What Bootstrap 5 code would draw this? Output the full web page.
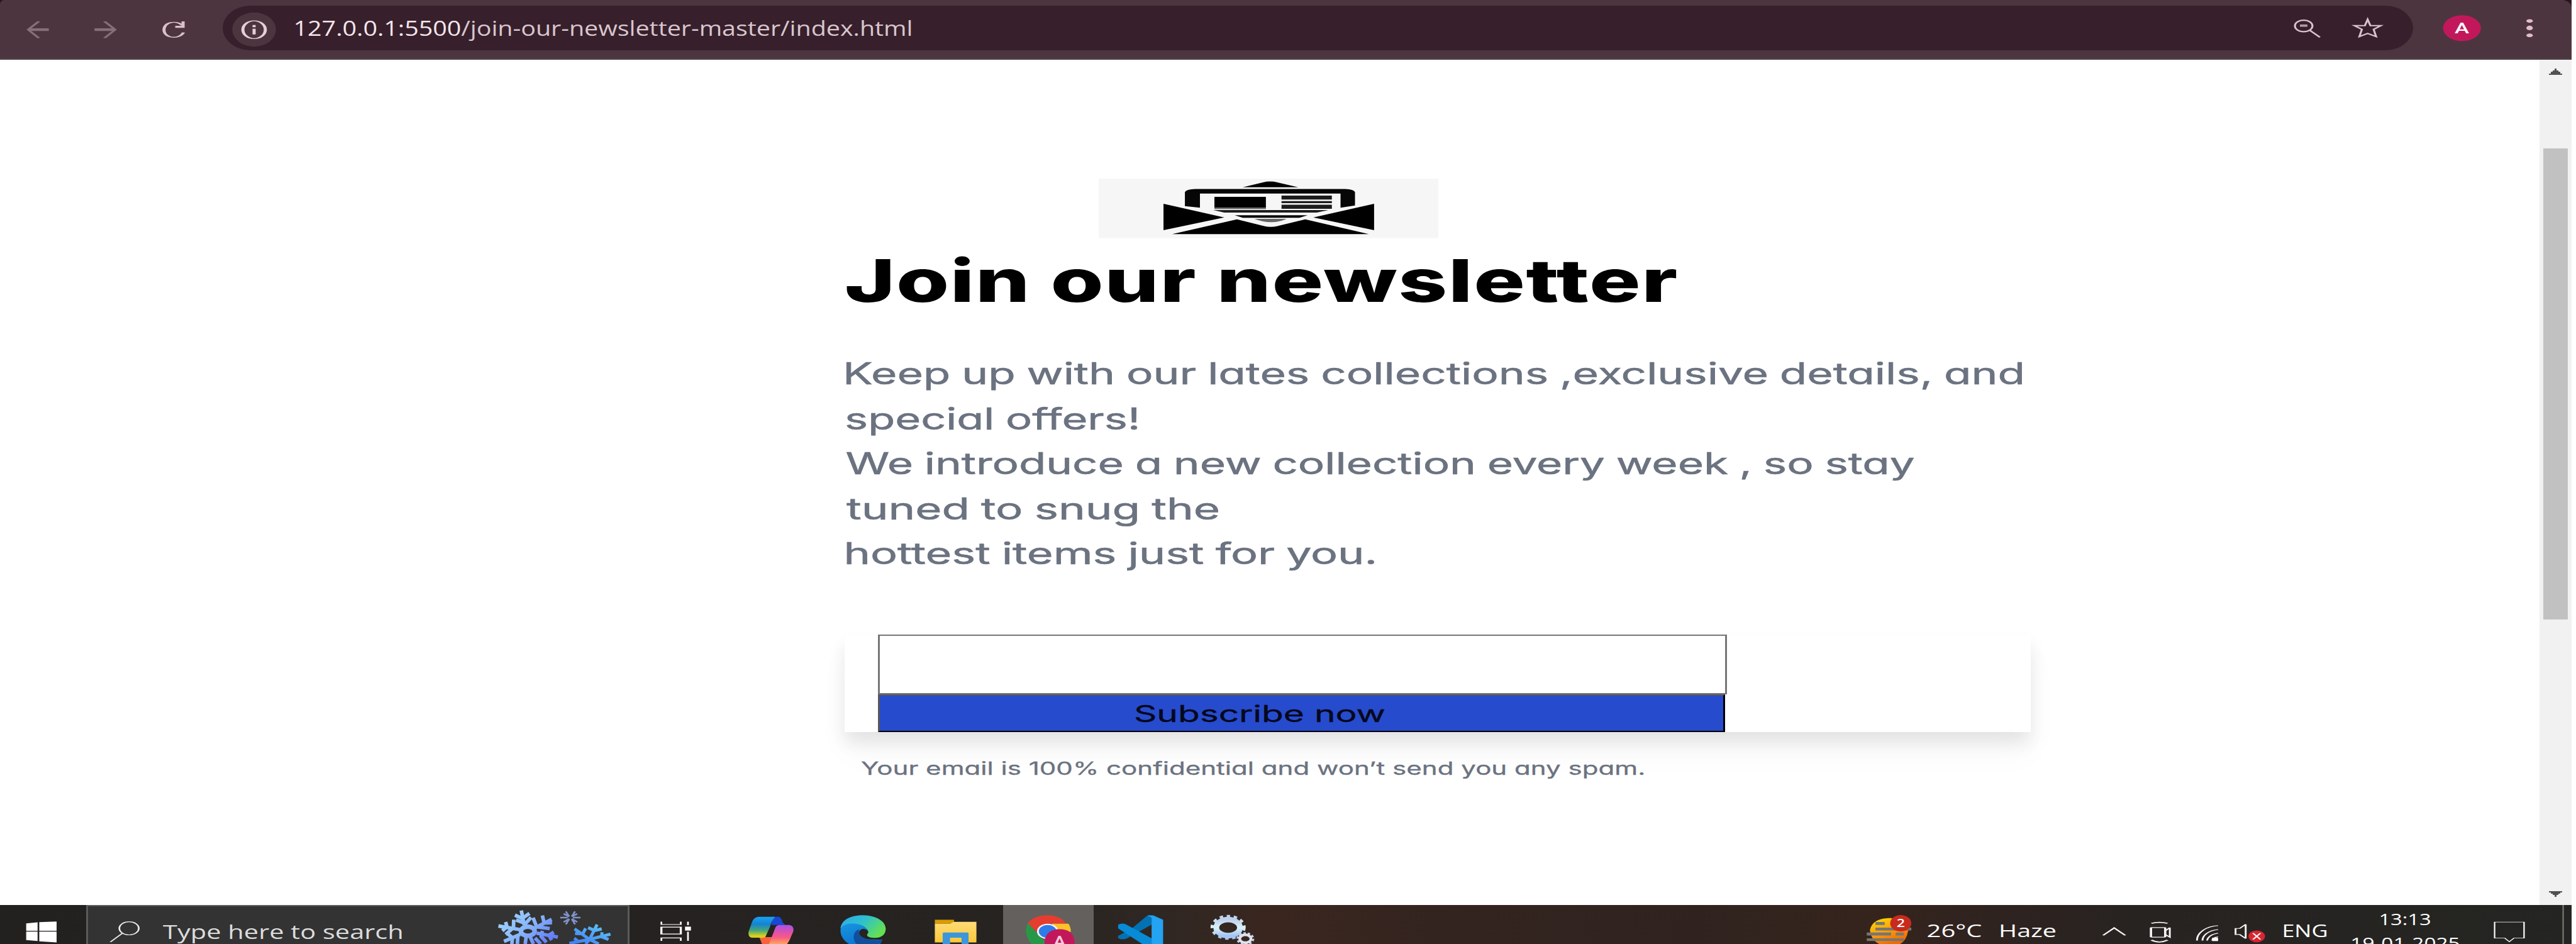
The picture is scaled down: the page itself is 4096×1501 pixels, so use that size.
<!DOCTYPE html>
<html lang="en">
<head>
<meta charset="utf-8">
<title>Join our newsletter</title>
<link href="https://cdn.jsdelivr.net/npm/bootstrap@5.3.0/dist/css/bootstrap.min.css" rel="stylesheet">
<style>
  html, body { height: 1501px; overflow: hidden; background: #fff; }
  .screen { width: 4089px; height: 1501px; }
  .fit { display: block; white-space: pre; width: max-content; transform-origin: 0 0; flex: none; }
  svg { display: block; flex: none; }

  .toolbar { height: 95px; background: #4d3540; border-bottom: 2px solid #4b4347; font-family: "Open Sans", "Noto Sans", sans-serif; }
  .omnibox { width: 3483px; height: 71.4px; margin-top: 8.6px; background: #37202b; border-radius: 45px / 36px; }
  .address { font-size: 32px; line-height: 71.4px; margin-left: 6px; width: 990px; color: #d9c6ce; }
  .address b { font-weight: 400; color: #f5e6ec; }

  .page-view { height: 1344px; }
  .page-main { width: 4038px; padding: 189px 0 0 1343px; font-family: Inter, "Open Sans", sans-serif; font-feature-settings: "cv11", "calt" 0, "liga" 0, "dlig" 0; font-variant-ligatures: none; }
  .column { width: 1886px; }
  .envelope { margin-left: 404px; }
  .headline { font-size: 94px; font-weight: 800; line-height: 100px; margin: 17px 0 0 3px; color: #000; letter-spacing: .012em; }
  .intro { font-size: 48px; line-height: 71.4px; margin: 62.8px 0 0 3px; color: #6b7280; -webkit-text-stroke: .6px #6b7280; }
  .intro .fit { word-spacing: -.03em; }
  .signup { height: 155px; margin-top: 94px; padding-left: 53px; background: #fff; box-shadow: 0 17px 26px rgba(0,0,0,.085), 0 34px 50px rgba(0,0,0,.03); }
  .email-box { width: 1350px; height: 94.4px; border: solid #767676; border-width: 2px 3px; border-radius: 0; padding: 0; background: #fff; display: block; }
  .subscribe { width: 1347px; height: 60.6px; border-style: solid; border-width: 2px 3px; border-color: #585858 #000 #000 #585858; background: #274bcd; color: #04081c; font-size: 37px; line-height: 56.6px; padding: 1px 0 0 407px; border-radius: 0; display: block; text-align: left; -webkit-text-stroke: .4px #04081c; }
  .note { font-size: 28.5px; line-height: 40px; margin: 37.6px 0 0 26px; color: #6b7280; -webkit-text-stroke: .3px #6b7280; }
  .scroller { width: 51px; background: #f1f1f1; padding: 14px 5px 0 15px; }
  .thumb { width: 39px; height: 749px; margin: 117px 0 0 -9px; background: #c1c1c1; }

  .taskbar { height: 62px; font-family: "Open Sans", "Noto Sans", sans-serif; color: #fff; overflow: hidden;
    background: linear-gradient(90deg, #232120 0, #262321 1600px, #2f2723 1850px, #3a261f 2020px, #33241f 2300px, #30231f 2700px, #35241c 2980px, #31231f 3100px, #272321 3400px, #242522 4089px); }
  .search { width: 864px; background: #333; border: solid #5b5b5b; border-width: 2px 3px 0; }
  .search .hint { width: 400px; font-size: 31px; line-height: 48px; padding-top: 16px; color: #dcdcdc; }
  .tray-text { font-size: 27.5px; line-height: 40px; padding-top: 21px; }
  .clock { font-size: 25px; line-height: 38.4px; padding-top: 2.5px; width: 170px; }
</style>
</head>
<body>
<div class="screen d-flex flex-column">

  <header class="toolbar d-flex flex-shrink-0">
    <svg width="354" height="93" viewBox="0 0 355.7 335.5" preserveAspectRatio="none" fill="none">
      <path d="M0 0H6Q1 4 0 22Z" fill="#2b131d"/>
      <g stroke="#866f79" stroke-width="5"><path d="M62 123L45 170L62 218M167 123L184 170L167 218"/><path d="M45 170H78M151 170H184" stroke-width="15"/></g>
      <path d="M291 145C285 118 263 120 262 170C262 225 288 225 293 186" stroke="#dbbfcb" stroke-width="5"/><path d="M295 123V160H280V148H290V123Z" fill="#dbbfcb"/>
    </svg>
    <div class="omnibox d-flex">
      <svg width="109" height="71.4" viewBox="356 33 110 257.6" preserveAspectRatio="none">
        <ellipse cx="406.500" cy="170" rx="35" ry="98" fill="#4d3540"/>
        <ellipse cx="406.500" cy="171" rx="18" ry="51" fill="none" stroke="#e4d0d9" stroke-width="5"/>
        <path d="M404 144h5v13h-5zM404 166h5v32h-5z" fill="#e4d0d9"/>
      </svg>
      <div class="address"><span class="fit" data-ink="980"><b>127.0.0.1:5500</b>/join-our-newsletter-master/index.html</span></div>
      <svg class="ms-auto" width="205" height="71.4" viewBox="402 33 516 274.5" preserveAspectRatio="none" fill="none" stroke="#d9c3cd" stroke-width="8">
        <circle cx="480" cy="157" r="35"/><path d="M504 183L545 226"/><path d="M465 155H495" stroke="#b49ca7" stroke-width="14"/>
        <path d="M736 117L747 155L789 155L760 178L770 222L736 203L703 222L713 178L683 155L725 155Z" stroke-width="8"/>
      </svg>
    </div>
    <svg width="252" height="93" viewBox="918 0 634 357.6" preserveAspectRatio="none">
      <path d="M1520 0H1552V46Q1550 12 1520 0Z" fill="#2b131d"/>
      <ellipse cx="1113.500" cy="172" rx="75.500" ry="79" fill="#c2185b"/>
      <text x="1084" y="204" font-size="90" textLength="58" lengthAdjust="spacingAndGlyphs" fill="#fff" font-family="Roboto, sans-serif" font-weight="500">A</text>
      <g fill="#e2bccb"><ellipse cx="1384" cy="128" rx="13" ry="11"/><ellipse cx="1384" cy="171" rx="13" ry="14"/><ellipse cx="1384" cy="216" rx="13" ry="11"/></g>
    </svg>
  </header>

  <div class="page-view d-flex flex-shrink-0">
    <main class="page-main flex-shrink-0">
      <div class="column">
        <svg class="envelope" width="540" height="94.500" viewBox="499 72 587 363" preserveAspectRatio="none">
          <rect x="499" y="72" width="587" height="363" fill="#f6f6f6"/>
          <path d="M748 125L783 95Q795 84 808 95L844 125Z"/>
          <path d="M648 240V155Q650 136 666 135H925Q940 137 942 155V236L917 250V163H674V250Z" fill="#060606"/>
          <path d="M699 183H788V250H699Z"/><path d="M699 250H788V258H699Z" fill="#666"/>
          <path d="M815 176H902V200H815ZM815 209H902V222H815ZM815 231H902V256H815Z" fill="#1c1c1c"/>
          <path d="M697 264H896L876 279H716Z" fill="#1c1c1c"/><path d="M734 296H860L846 311H748Z"/>
          <path d="M768 318H824Q798 358 768 318Z" fill="#666"/>
          <path d="M611 226L716 309L611 387ZM975 226L870 309L975 387Z"/>
          <path d="M626 411L738 321L785 362Q796 372 808 362L856 321L966 411Z"/>
        </svg>
        <h1 class="headline"><span class="fit" data-ink="1321">Join our newsletter</span></h1>
        <div class="intro">
          <span class="fit" data-ink="1869">Keep up with our lates collections ,exclusive details, and</span>
          <span class="fit" data-ink="463">special offers!</span>
          <span class="fit" data-ink="1697">We introduce a new collection every week , so stay</span>
          <span class="fit" data-ink="591">tuned to snug the</span>
          <span class="fit" data-ink="840">hottest items just for you.</span>
        </div>
        <form class="signup">
          <input class="email-box" type="email" aria-label="Email">
          <button class="subscribe" type="button"><span class="fit" data-ink="395">Subscribe now</span></button>
        </form>
        <div class="note"><span class="fit" data-ink="1244">Your email is 100% confidential and won’t send you any spam.</span></div>
      </div>
    </main>
    <div class="scroller flex-shrink-0 d-flex flex-column">
      <svg width="21" height="10" viewBox="0 0 21 10"><path d="M0 10V8H3V5H6V3H9V0H12V3H15V5H18V8H21V10Z" fill="#505050"/></svg>
      <div class="thumb"></div>
      <svg class="mt-auto" style="margin-bottom:13px" width="21" height="9" viewBox="0 0 21 9"><path d="M0 0H21V2H18V4H15V6H12V9H9V6H6V4H3V2H0Z" fill="#505050"/></svg>
    </div>
  </div>

  <footer class="taskbar d-flex flex-shrink-0">
    <svg width="137" height="62" viewBox="0 132 204 238" preserveAspectRatio="none" fill="#fff">
      <path d="M62 244L89 238V289H62ZM93 237L134 233V289H93ZM62 294H89V352L62 346ZM93 294H134V360L93 354Z"/>
    </svg>
    <div class="search d-flex">
      <svg width="119" height="60" viewBox="208 141 177 229" preserveAspectRatio="none" fill="none" stroke="#eee" stroke-width="4">
        <ellipse cx="305" cy="275" rx="23" ry="40"/><path d="M289 305L261 358"/>
      </svg>
      <div class="hint"><span class="fit" data-ink="380">Type here to search</span></div>
      <svg class="ms-auto" width="233" height="60" viewBox="0 20 897 230" preserveAspectRatio="none" fill="none">
        <defs>
          <linearGradient id="ice" gradientUnits="userSpaceOnUse" x1="200" y1="50" x2="380" y2="250"><stop offset="0" stop-color="#9bd0fb"/><stop offset=".5" stop-color="#86b4fb"/><stop offset="1" stop-color="#6580f4"/></linearGradient>
          <linearGradient id="ice2" gradientUnits="userSpaceOnUse" x1="700" y1="130" x2="640" y2="260"><stop offset="0" stop-color="#5bbcf5"/><stop offset="1" stop-color="#4484f2"/></linearGradient>
        </defs>
        <g stroke="url(#ice)" stroke-width="22">
          <path d="M246 46L264 135M207 74L252 94L296 64M214 104L272 125L306 88"/>
          <path d="M432 100L330 152M375 76L386 122L434 120M318 90L340 145L420 156"/>
          <path d="M470 208L340 184M445 178L415 196L432 226M375 170L368 205L400 240"/>
          <path d="M106 140L235 162M150 116L158 144L130 170M200 102L198 150L150 192"/>
          <path d="M140 234L238 192M160 186L192 212L188 250M225 200L222 250M300 205L320 250M276 205L270 250M330 214L365 250"/>
          <ellipse cx="286" cy="172" rx="42" ry="28" stroke-width="28"/>
        </g>
        <g stroke="#7f92c8" stroke-width="10"><path d="M484 89H530M562 89H608M518 52L540 82M554 98L576 130M576 52L554 82M540 98L518 130M505 66L530 78L522 54M588 66L565 78L570 54M505 116L530 102L524 126M588 116L565 102L570 126"/></g>
        <g stroke="url(#ice2)" stroke-width="19">
          <path d="M710 132L664 222M655 150L694 168L738 158M572 158L664 222M575 186L622 188L640 155M792 190L664 222M740 178L738 206L780 222M540 246L664 222M570 214L600 240M664 222L720 250M664 222L640 250"/>
        </g>
      </svg>
    </div>
    <svg width="139" height="62" viewBox="-22.400 132 207 238" preserveAspectRatio="none" fill="none" stroke="#fff" stroke-width="4">
      <path d="M53 234V251H99V234M53 351V333H99V351"/><rect x="53" y="267" width="46" height="42" stroke-width="5"/>
      <path d="M116 234V255M116 295V351"/><path d="M109 264h14v24h-14z" fill="#fff" stroke="none"/>
    </svg>
    <svg width="160" height="62" viewBox="-117 12 615 238" preserveAspectRatio="none">
      <defs>
        <linearGradient id="cpA" x1="0" y1="0" x2="0" y2="1"><stop offset="0" stop-color="#1ba2f5"/><stop offset=".35" stop-color="#1583d0"/><stop offset=".65" stop-color="#46a678"/><stop offset=".9" stop-color="#d8cf1d"/></linearGradient>
        <linearGradient id="cpB" x1="0" y1="0" x2="0" y2="1"><stop offset="0" stop-color="#a553ea"/><stop offset=".35" stop-color="#d951b0"/><stop offset=".65" stop-color="#f75a83"/><stop offset="1" stop-color="#ffa55c"/></linearGradient>
      </defs>
      <path d="M225 84H262Q280 92 283 116L300 134H215Z" fill="#1748d2"/>
      <path d="M142 208H220L200 250H158Z" fill="#f8613c"/>
      <path d="M135 84H238Q218 105 205 150L180 205Q172 215 140 212H95Q72 206 76 176L98 115Q108 88 135 84Z" fill="url(#cpA)"/>
      <path d="M262 134H325Q355 138 350 172L325 230L312 250H200L225 190L240 150Q246 136 262 134Z" fill="url(#cpB)"/>
    </svg>
    <svg width="150" height="62" viewBox="498 12 577 238" preserveAspectRatio="none">
      <defs>
        <linearGradient id="edA" x1="0" y1="0" x2="1" y2=".5"><stop offset="0" stop-color="#30a8ee"/><stop offset=".5" stop-color="#2dc0cf"/><stop offset="1" stop-color="#63df55"/></linearGradient>
        <linearGradient id="edB" x1="0" y1="0" x2=".6" y2="1"><stop offset="0" stop-color="#1895dd"/><stop offset="1" stop-color="#0b74d4"/></linearGradient>
      </defs>
      <path d="M638 155C645 100 700 74 778 74C860 76 915 112 915 158C914 195 885 214 845 213C805 212 790 198 808 182C812 160 780 140 720 136Z" fill="url(#edA)"/>
      <path d="M638 165C640 135 680 124 715 125C765 126 800 148 806 170C790 150 756 155 752 178C752 208 785 225 840 222L895 224L880 250H690C650 225 638 195 638 165Z" fill="url(#edB)"/>
      <path d="M750 160C715 175 708 215 735 250H875L897 224C830 232 765 220 752 186Z" fill="#114f9d"/>
    </svg>
    <svg width="145" height="62" viewBox="1075 12 557 238" preserveAspectRatio="none">
      <defs><linearGradient id="fo" x1="0" y1="0" x2="0" y2="1"><stop offset="0" stop-color="#ffdc77"/><stop offset="1" stop-color="#fbc837"/></linearGradient></defs>
      <path d="M1215 102H1332V126H1215Z" fill="#dc9b00"/><path d="M1215 126H1310L1330 115H1469V240H1215Z" fill="url(#fo)"/>
      <path d="M1263 250V186Q1263 180 1270 180H1415Q1421 180 1421 186V250H1378V212H1308V250Z" fill="#3c96dc"/>
    </svg>
    <svg width="144" height="62" viewBox="12 12 535 238" preserveAspectRatio="none">
      <rect x="12" y="12" width="535" height="238" fill="#64605d"/>
      <path d="M155 125C185 85 230 74 280 74C330 75 365 95 385 126H275L220 185Z" fill="#e53d30"/>
      <path d="M158 122C140 160 142 205 180 250H270L215 185Z" fill="#279847"/>
      <path d="M300 126H398Q412 145 412 175L330 190Z" fill="#fcc22c"/>
      <ellipse cx="275" cy="173" rx="63" ry="47" fill="#f5f5f8"/><ellipse cx="275" cy="173" rx="52" ry="39" fill="#2f7bea"/>
      <path d="M257 250C255 190 290 160 345 160C405 160 435 190 435 250Z" fill="#c2185b"/>
      <text x="307" y="268" font-size="98" textLength="76" lengthAdjust="spacingAndGlyphs" fill="#f7cddd" font-family="Roboto, sans-serif" font-weight="500">A</text>
    </svg>
    <svg width="141" height="62" viewBox="547 12 525 238" preserveAspectRatio="none">
      <path d="M866 75H890V132L745 215Q715 228 692 214V200L770 158Z" fill="#0272b4"/>
      <path d="M692 132Q715 120 738 130L890 215V250H835L692 155Z" fill="#078bd6"/>
      <path d="M866 75H900L958 102V250H890V90Z" fill="#23a3f1"/>
    </svg>
    <svg width="220" height="62" viewBox="1072 12 819 238" preserveAspectRatio="none" fill="none">
      <defs><linearGradient id="ge" x1="0" y1="0" x2="0" y2="1"><stop offset="0" stop-color="#bdcfee"/><stop offset=".5" stop-color="#d9f3f7"/><stop offset="1" stop-color="#a4c4f4"/></linearGradient></defs>
      <ellipse cx="1343" cy="148" rx="94" ry="66" stroke="url(#ge)" stroke-width="20" stroke-dasharray="20 21"/>
      <ellipse cx="1343" cy="150" rx="70" ry="49" stroke="url(#ge)" stroke-width="34"/>
      <ellipse cx="1445" cy="218" rx="46" ry="33" stroke="#c5d2e6" stroke-width="14" stroke-dasharray="14 11"/>
      <ellipse cx="1445" cy="218" rx="33" ry="24" stroke="#dce3ee" stroke-width="16"/>
    </svg>

    <svg class="ms-auto" width="111" height="62" viewBox="0 12 152 238" preserveAspectRatio="none">
      <defs><linearGradient id="sun" x1="0" y1="0" x2=".5" y2="1"><stop offset="0" stop-color="#fde000"/><stop offset=".5" stop-color="#fba60c"/><stop offset="1" stop-color="#ee6c05"/></linearGradient></defs>
      <path d="M72 92C95 92 116 120 115 170Q112 225 98 250H52Q34 225 32 165C36 110 55 94 72 92Z" fill="url(#sun)"/>
      <path d="M44 116H64V134H44ZM44 150H122V167H44ZM25 180H78V198H25ZM88 180H106V198H88ZM25 215H106V232H25Z" fill="#777672"/>
      <ellipse cx="99" cy="123" rx="23" ry="50" fill="#c82a1e"/>
      <text x="90" y="146" font-size="68" textLength="18" lengthAdjust="spacingAndGlyphs" fill="#fff" font-family="Open Sans, sans-serif" font-weight="600">2</text>
    </svg>
    <div class="tray-text d-flex" style="width:240px;padding-left:4px"><span class="fit" style="width:116px" data-ink="86">26°C</span><span class="fit" data-ink="87">Haze</span></div>
    <svg width="330" height="62" viewBox="479 12 451.400 238" preserveAspectRatio="none" fill="none" stroke="#f4f4f4" stroke-width="4">
      <path d="M538 197L562 152L586 197" stroke-width="5"/>
      <path d="M643 124Q660 112 678 124M643 226Q660 250 678 226" stroke-width="6"/><rect x="642" y="150" width="31" height="58" rx="3" stroke-width="5"/><path d="M673 170L683 150V208L673 192"/>
      <path d="M742 229C742 180 762 142 788 138M754 229C754 196 768 167 788 162M764 229C766 205 774 190 788 184M775 228Q777 210 788 206"/><path d="M775 212h13v20h-13z" fill="#fff" stroke="none"/>
      <path d="M826 155H835L848 130V216L835 192H826Z"/>
      <ellipse cx="872" cy="203" rx="18" ry="36" fill="#da2430" stroke="none"/><path d="M864 184L880 222M880 184L864 222"/>
    </svg>
    <div class="tray-text" style="width:109px"><span class="fit" data-ink="68">ENG</span></div>
    <div class="clock"><span class="fit" data-ink="79" style="margin-left:45px">13:13</span><span class="fit" data-ink="170">19-01-2025</span></div>
    <svg width="179" height="62" viewBox="1313.600 12 244.800 238" preserveAspectRatio="none" fill="none" stroke="#fff" stroke-width="3">
      <path d="M1391 116H1455V214H1433L1423 236L1413 214H1391Z"/><path d="M1540 12V250" stroke="#777"/>
    </svg>
  </footer>
</div>
<script src="https://cdn.jsdelivr.net/npm/bootstrap@5.3.0/dist/js/bootstrap.bundle.min.js"></script>
<script>
  // Stretch every label horizontally so that its ink spans data-ink pixels.
  const ctx = document.createElement('canvas').getContext('2d');
  document.querySelectorAll('.fit').forEach(el => {
    const cs = getComputedStyle(el);
    ctx.font = cs.fontWeight + ' ' + cs.fontSize + ' ' + cs.fontFamily;
    const m = ctx.measureText(el.textContent);
    const range = document.createRange();
    range.selectNodeContents(el);
    const natural = range.getBoundingClientRect().width;
    const k = el.dataset.ink / (natural - m.width + m.actualBoundingBoxLeft + m.actualBoundingBoxRight);
    el.style.transform = `translateX(${m.actualBoundingBoxLeft * k}px) scaleX(${k})`;
  });
</script>
</body>
</html>
